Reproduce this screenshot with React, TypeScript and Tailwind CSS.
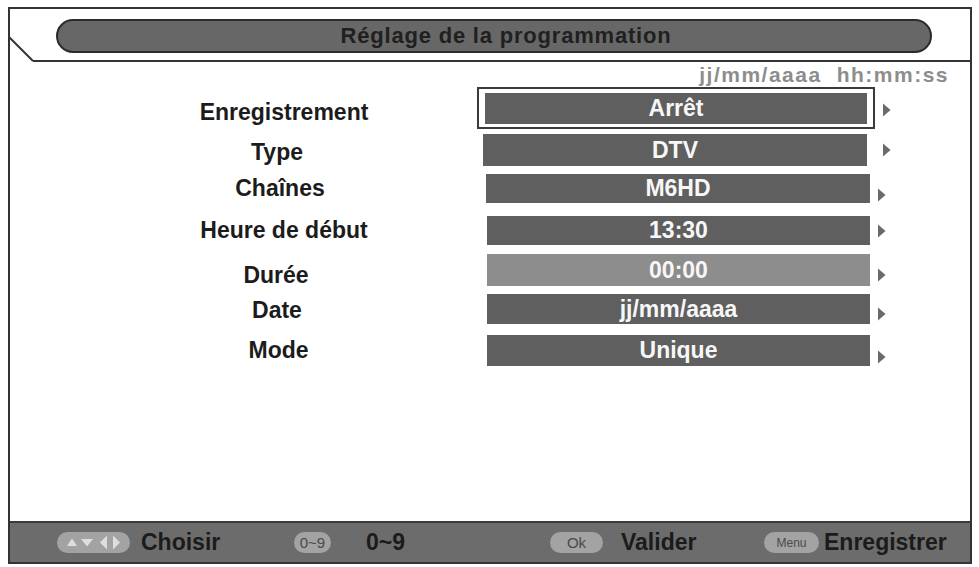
import React from "react";

interface Row {
  label: string;
  value: string;
  // tailwind classes for the row's place and the box
  rowCls: string;
  labelCls: string;
  boxCls: string;
  arrowCls: string;
  framed?: boolean;
  dim?: boolean;
}

const rows: Row[] = [
  {
    label: "Enregistrement",
    value: "Arrêt",
    rowCls: "h-[42px] mt-[1px]",
    labelCls: "pt-[8px] pl-[8px]",
    boxCls: "ml-[97px]",
    arrowCls: "ml-[7px] mt-[4px]",
    framed: true,
  },
  {
    label: "Type",
    value: "DTV",
    rowCls: "h-[32px] mt-[5px]",
    labelCls: "pt-[4px] pr-[6px]",
    boxCls: "ml-[103px] w-[384px]",
    arrowCls: "ml-[15px]",
  },
  {
    label: "Chaînes",
    value: "M6HD",
    rowCls: "h-[29px] mt-[8px]",
    labelCls: "",
    boxCls: "ml-[106px] w-[384px]",
    arrowCls: "ml-[7px] mt-[12px]",
  },
  {
    label: "Heure de début",
    value: "13:30",
    rowCls: "h-[29px] mt-[13px]",
    labelCls: "pl-[8px]",
    boxCls: "ml-[107px] w-[383px]",
    arrowCls: "ml-[7px]",
  },
  {
    label: "Durée",
    value: "00:00",
    rowCls: "h-[32px] mt-[9px]",
    labelCls: "pt-[10px] pr-[8px]",
    boxCls: "ml-[107px] w-[383px]",
    arrowCls: "ml-[7px] mt-[10px]",
    dim: true,
  },
  {
    label: "Date",
    value: "jj/mm/aaaa",
    rowCls: "h-[30px] mt-[8px]",
    labelCls: "pt-[2px] pr-[6px]",
    boxCls: "ml-[107px] w-[383px]",
    arrowCls: "ml-[7px] mt-[10px]",
  },
  {
    label: "Mode",
    value: "Unique",
    rowCls: "h-[31px] mt-[11px]",
    labelCls: "pr-[3px]",
    boxCls: "ml-[107px] w-[383px]",
    arrowCls: "ml-[7px] mt-[12px]",
  },
];

function Arrow({ className }: { className: string }) {
  return (
    <svg className={`w-[9px] h-[14px] shrink-0 ${className}`} viewBox="0 0 9 14">
      <path d="M1 0.5 L8.5 7 L1 13.5 Z" fill="#6a6a6a" />
    </svg>
  );
}

function NavPad() {
  return (
    <svg className="w-[73px] h-[21px]" viewBox="0 0 73 21">
      <rect x="0" y="0" width="73" height="21" rx="10.5" fill="#a3a3a3" />
      <path d="M10 14 L15 6.5 L20 14 Z" fill="#dedede" />
      <path d="M24 7 L36 7 L30 14.5 Z" fill="#dedede" />
      <path d="M50 3.5 L43 10.5 L50 17.5 Z" fill="#dedede" />
      <path d="M56 3.5 L63 10.5 L56 17.5 Z" fill="#dedede" />
    </svg>
  );
}

function Pill({ text, w, small }: { text: string; w: string; small?: boolean }) {
  return (
    <div
      className={`${w} h-[21px] rounded-full bg-[#a3a3a3] flex items-center justify-center font-normal text-[#4a4a4a] ${
        small ? "text-[12px]" : "text-[15px]"
      } leading-none`}
    >
      {text}
    </div>
  );
}

export default function App() {
  return (
    <div
      className="w-[979px] h-[567px] bg-white overflow-hidden pt-[7px] pl-[8px]"
      style={{ fontFamily: '"Liberation Sans", Arial, sans-serif' }}
    >
      <div className="w-[964px] h-[557px] border-2 border-[#333] flex flex-col">
        {/* header */}
        <div className="relative h-[53px] shrink-0">
          <svg className="absolute left-[-2px] top-0 w-[28px] h-[53px]" viewBox="0 0 28 53">
            <line x1="1" y1="28" x2="25" y2="52" stroke="#333" strokeWidth="2" />
          </svg>
          <div className="absolute left-[23px] right-0 bottom-0 h-[2px] bg-[#333]" />
          <div className="ml-[46px] mt-[10px] w-[876px] h-[34px] rounded-full border-2 border-[#2b2b2b] bg-[#676767] flex items-center justify-center pl-[24px]">
            <span className="text-[22px] font-bold tracking-[0.8px] text-[#202020] leading-none">
              Réglage de la programmation
            </span>
          </div>
        </div>

        {/* content */}
        <div className="flex-1 flex flex-col">
          <div className="h-[24px] flex items-center justify-end pr-[21px] gap-[15px] text-[21px] font-bold tracking-[1.5px] text-[#8d8d8d] leading-none">
            <span>jj/mm/aaaa</span>
            <span>hh:mm:ss</span>
          </div>

          {rows.map((r) => (
            <div key={r.label} className={`flex items-start shrink-0 ${r.rowCls}`}>
              <div
                className={`ml-[170px] w-[200px] h-full flex items-center justify-center text-[23px] font-bold text-[#1c1c1c] leading-none ${r.labelCls}`}
              >
                {r.label}
              </div>
              {r.framed ? (
                <div className={`${r.boxCls} w-[398px] h-full border-2 border-[#3a3a3a] bg-white pt-[4px] pl-[6px] pr-[6px]`}>
                  <div className="h-[31px] bg-[#5f5f5f] flex items-center justify-center text-[23px] font-bold text-[#f7f7f7] leading-none">
                    {r.value}
                  </div>
                </div>
              ) : (
                <div
                  className={`${r.boxCls} h-full ${
                    r.dim ? "bg-[#8e8d8d]" : "bg-[#5f5f5f]"
                  } flex items-center justify-center text-[23px] font-bold text-[#f7f7f7] leading-none`}
                >
                  {r.value}
                </div>
              )}
              <div className="h-full flex items-center">
                <Arrow className={r.arrowCls} />
              </div>
            </div>
          ))}
        </div>

        {/* footer */}
        <div className="h-[41px] shrink-0 border-t-2 border-[#3b3b3b] bg-[#6c6c6c] flex items-center text-[23px] font-bold text-[#1b1b1b] leading-none">
          <div className="ml-[47px] w-[237px] flex items-center gap-[11px]">
            <NavPad />
            <span>Choisir</span>
          </div>
          <div className="w-[256px] flex items-center gap-[35px]">
            <Pill text="0~9" w="w-[37px]" />
            <span>0~9</span>
          </div>
          <div className="w-[214px] flex items-center gap-[18px]">
            <Pill text="Ok" w="w-[53px]" />
            <span>Valider</span>
          </div>
          <div className="flex items-center gap-[5px]">
            <Pill text="Menu" w="w-[55px]" small />
            <span>Enregistrer</span>
          </div>
        </div>
      </div>
    </div>
  );
}
